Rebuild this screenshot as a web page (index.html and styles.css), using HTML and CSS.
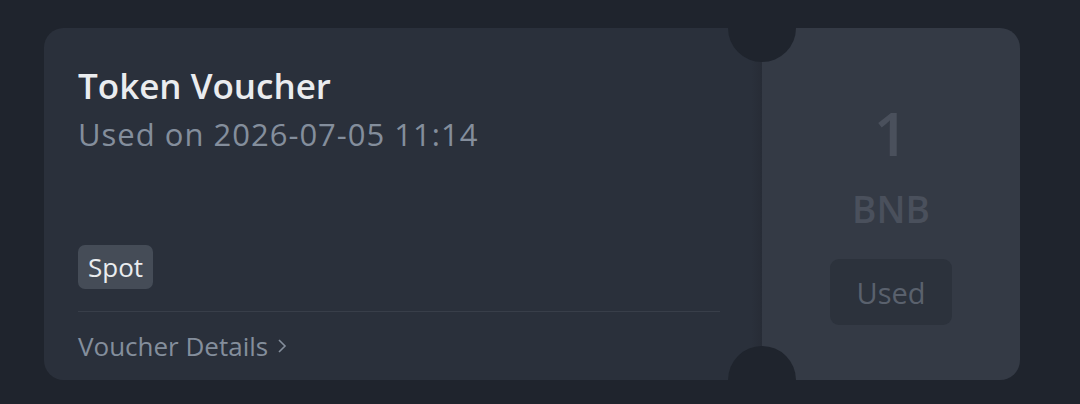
FILE: index.html
```html
<!DOCTYPE html>
<html lang="en">
<head>
  <meta charset="UTF-8" />
  <title>Token Voucher</title>
  <link rel="stylesheet" href="styles.css">
</head>
<body>
  <div class="voucher">
    <div class="voucher-main">
      <h2 class="voucher-title">Token Voucher</h2>
      <div class="voucher-date">Used on 2026-07-05 11:14</div>
      <div class="voucher-tags">
        <span class="tag">Spot</span>
      </div>
      <a class="voucher-link" href="#">Voucher Details
        <svg width="12" height="18" viewBox="0 0 12 18"><path d="M3 3l6 6-6 6" fill="none" stroke="currentColor" stroke-width="1.6"/></svg>
      </a>
    </div>
    <div class="voucher-side">
      <div class="amount">1</div>
      <div class="unit">BNB</div>
      <button class="status" disabled>Used</button>
    </div>
    <span class="notch notch-top"></span>
    <span class="notch notch-bottom"></span>
  </div>
</body>
</html>
```

FILE: styles.css
```css
:root {
  --page-bg: #1f242d;
  --main-bg: #2a303b;
  --side-bg: #343a45;
  --text: #eaecef;
  --muted: #848e9c;
  --faded: #4a505c;
}

* {
  box-sizing: border-box;
}

body {
  margin: 0;
  background: var(--page-bg);
  font-family: "Open Sans", Lato, Arial, sans-serif;
  color: var(--text);
}

.voucher {
  position: relative;
  display: flex;
  margin: 28px 60px 24px 44px;
  height: 352px;
  border-radius: 20px;
  overflow: hidden;
}

.voucher-main {
  flex: 0 0 718px;
  display: flex;
  flex-direction: column;
  padding: 0 42px 0 34px;
  background: linear-gradient(to right, var(--main-bg) 98.5%, #272c36);
}

.voucher-title {
  margin: 35px 0 0;
  font-size: 35px;
  font-weight: 600;
  line-height: 46px;
}

.voucher-date {
  margin-top: 5px;
  font-size: 31px;
  letter-spacing: 1px;
  line-height: 40px;
  color: var(--muted);
}

.voucher-tags {
  margin-top: auto;
  padding-bottom: 22px;
  border-bottom: 1px solid #383e49;
}

.tag {
  display: inline-block;
  padding: 0 10px;
  height: 44px;
  line-height: 44px;
  border-radius: 7px;
  background: #454c57;
  font-size: 26px;
}

.voucher-link {
  display: flex;
  align-items: center;
  gap: 8px;
  height: 68px;
  color: var(--muted);
  text-decoration: none;
  font-size: 26px;
}

.voucher-side {
  flex: 1;
  display: flex;
  flex-direction: column;
  align-items: center;
  background: var(--side-bg);
  color: var(--faded);
}

.amount {
  margin-top: 69px;
  font-size: 60px;
  font-weight: 600;
  line-height: 72px;
}

.unit {
  margin-top: 18px;
  font-size: 37px;
  font-weight: 600;
  line-height: 44px;
}

.status {
  margin-top: 28px;
  width: 122px;
  height: 66px;
  border: none;
  border-radius: 9px;
  background: #2c323c;
  color: #5a616d;
  font-family: inherit;
  font-size: 29px;
}

.notch {
  position: absolute;
  left: 684px;
  width: 68px;
  height: 68px;
  border-radius: 50%;
  background: var(--page-bg);
}

.notch-top { top: -34px; }
.notch-bottom { bottom: -34px; }
```
